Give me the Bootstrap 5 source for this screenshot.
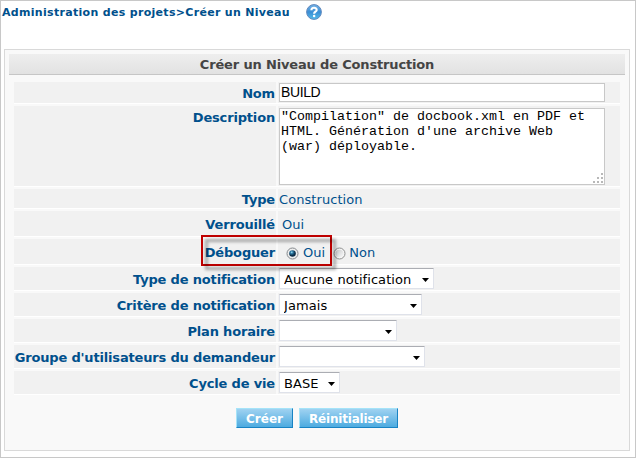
<!DOCTYPE html>
<html lang="fr">
<head>
<meta charset="utf-8">
<title>Créer un Niveau</title>
<meta name="viewport" content="width=device-width, initial-scale=1">
<link rel="stylesheet" href="https://cdn.jsdelivr.net/npm/bootstrap@5.3.0/dist/css/bootstrap.min.css">
<style>
body{font-family:Verdana,"DejaVu Sans",sans-serif;font-size:13px;line-height:16px;letter-spacing:.07px;color:#00508c;height:458px;border:1px solid #c8c8c8;overflow:hidden;background:#fff}
.crumb{font-size:11px;letter-spacing:.31px;height:48px;padding:3px 0 0 1px}
.crumb span{padding-top:1px}
.crumb svg{margin-left:16px}
.panel{margin:0 5px 0 3px;height:402px;border:1px solid #d9d9d9;background:#f9f9f9;padding:4px}
.panel-title{height:21px;line-height:21px;letter-spacing:-.16px;color:#444;background:linear-gradient(#eee,#e2e2e2);border-bottom:1px solid #c6c6c6;margin-bottom:7px}
.rows{margin:0 5px}
.line{height:24px;margin-bottom:2px;border-bottom:1px solid #fff;gap:2px}
.lab{width:262px;background:#f1f1f1;padding:5px 1px 0 0;white-space:nowrap;letter-spacing:-.17px}
.val{background:#f1f1f1;padding:1px;white-space:nowrap}
.line-name{height:22px}
.line-name .lab{padding-top:4px}
.line-desc{height:81px}
.line-desc .lab{padding-top:4px}
.line-type{height:20px}
.line-type .lab,.line-type .val{padding-top:3px}
.line-tall{height:26px}
.line-tall .lab,.line-tall .val{padding-top:6px}
.form-control.fld{width:326px;height:19px;min-height:0;border:1px solid #c8c8c8;border-radius:0;padding:0 1px 1px;color:#000;font:14px/16px "Liberation Sans",Arial,sans-serif;letter-spacing:-.4px}
.form-control.area{height:77px;margin-top:1px;resize:none;overflow:hidden;font:13.33px/15px "Liberation Mono","Courier New",monospace;letter-spacing:0}
.grip{right:1px;bottom:1px}
.form-select.pick{height:21px;border:1px solid #dfe2ea;border-top-color:#abadb3;border-radius:1px;color:#000;padding:2px 16px 0 4px;font-size:13px;line-height:17px;letter-spacing:.07px;background:#fff url("data:image/svg+xml,%3Csvg xmlns='http://www.w3.org/2000/svg' width='7' height='4'%3E%3Cpath d='M0 0h7L3.5 4z'/%3E%3C/svg%3E") no-repeat right 4px top 9px/7px 4px}
.w155{width:155px}.w143{width:143px}.w118{width:118px}.w146{width:146px}.w61{width:61px}
.callout{left:-77px;top:-4px;width:131px;height:31px;border:2px solid #c00000;z-index:2;pointer-events:none}
.callout::before{content:"";position:absolute;z-index:-1;left:2px;top:2px;width:131px;height:31px;border:3px solid rgba(0,0,0,.3);filter:blur(1.5px)}
.debug{padding-left:8px}
.debug svg{margin:2px 4px 0 0}
.debug .opt-no{margin:2px 3px 0 8px}
.btn.act{font-size:12px;font-weight:700;line-height:18px;height:20px;padding:1px 0 0;color:#fff;border:1px solid #a5e3f8;border-right-color:#1883c4;border-bottom-color:#1883c4;border-radius:0;background:linear-gradient(#9fd2f1,#4dabe0);letter-spacing:0}
.btn.act.w99{letter-spacing:-.2px}
.w57{width:57px}.w99{width:99px}
.actions{gap:6px;padding:11px 0 0 227px}
</style>
</head>
<body>
<header class="crumb d-flex fw-bold"><span>Administration des projets&gt;Créer un Niveau</span>
<svg width="16" height="16" viewBox="0 0 16 16"><defs><linearGradient id="hg" x2="0" y2="1"><stop stop-color="#75b5e7"/><stop offset=".5" stop-color="#3b8dd4"/><stop offset="1" stop-color="#54bceb"/></linearGradient></defs><circle cx="8" cy="8" r="7.4" fill="url(#hg)" stroke="#6389bd"/><path d="M5.4 6.2C5.4 3 10.7 3 10.7 5.9C10.7 7.7 8.1 7.7 8.1 9.7" fill="none" stroke="#fff" stroke-width="2.1"/><circle cx="8.1" cy="12" r="1.25" fill="#fff"/></svg></header>
<main class="panel">
<div class="panel-title text-center fw-bold">Créer un Niveau de Construction</div>
<div class="rows">
<div class="line line-name d-flex"><label class="lab text-end fw-bold" for="nom">Nom</label><div class="val flex-grow-1"><input id="nom" class="form-control fld" value="BUILD"></div></div>
<div class="line line-desc d-flex"><label class="lab text-end fw-bold" for="desc">Description</label><div class="val flex-grow-1"><div class="position-relative d-inline-block"><textarea id="desc" class="form-control fld area d-block" spellcheck="false">"Compilation" de docbook.xml en PDF et
HTML. Génération d'une archive Web
(war) déployable.</textarea><svg class="grip position-absolute" width="12" height="11" fill="#b8b8b8"><path d="M9 0h2v2h-2zM5 4h2v2h-2zM9 4h2v2h-2zM1 8h2v2h-2zM5 8h2v2h-2zM9 8h2v2h-2z"/></svg></div></div></div>
<div class="line line-type d-flex"><div class="lab text-end fw-bold">Type</div><div class="val flex-grow-1">Construction</div></div>
<div class="line line-tall d-flex"><div class="lab text-end fw-bold">Verrouillé</div><div class="val flex-grow-1 ps-1">Oui</div></div>
<div class="line line-tall d-flex"><div class="lab text-end fw-bold">Déboguer</div><div class="val debug flex-grow-1 position-relative d-flex"><div class="callout position-absolute"></div>
<svg width="13" height="13" viewBox="0 0 13 13"><defs><radialGradient id="rb" cx=".38" cy=".32"><stop stop-color="#a9e4f6"/><stop offset=".4" stop-color="#2f7ca6"/><stop offset="1" stop-color="#0b2d47"/></radialGradient></defs><circle cx="6.5" cy="6.5" r="5.5" fill="#eee" stroke="#84888c"/><circle cx="6.5" cy="6.5" r="3.3" fill="url(#rb)"/></svg><span>Oui</span>
<svg class="opt-no" width="13" height="13" viewBox="0 0 13 13"><defs><linearGradient id="rg" x2="1" y2="1"><stop stop-color="#c4c6c9"/><stop offset="1" stop-color="#fafafa"/></linearGradient></defs><circle cx="6.5" cy="6.5" r="5.5" fill="#f4f4f4" stroke="#8e8f8f"/><circle cx="6.5" cy="6.5" r="3.8" fill="url(#rg)"/></svg><span>Non</span></div></div>
<div class="line d-flex"><label class="lab text-end fw-bold">Type de notification</label><div class="val flex-grow-1"><select class="form-select pick w155"><option>Aucune notification</option></select></div></div>
<div class="line d-flex"><label class="lab text-end fw-bold">Critère de notification</label><div class="val flex-grow-1"><select class="form-select pick w143"><option>Jamais</option></select></div></div>
<div class="line d-flex"><label class="lab text-end fw-bold">Plan horaire</label><div class="val flex-grow-1"><select class="form-select pick w118"><option></option></select></div></div>
<div class="line d-flex"><label class="lab text-end fw-bold">Groupe d'utilisateurs du demandeur</label><div class="val flex-grow-1"><select class="form-select pick w146"><option></option></select></div></div>
<div class="line d-flex"><label class="lab text-end fw-bold">Cycle de vie</label><div class="val flex-grow-1"><select class="form-select pick w61"><option>BASE</option></select></div></div>
</div>
<div class="actions d-flex"><button class="btn act w57">Créer</button><button class="btn act w99">Réinitialiser</button></div>
</main>
<script src="https://cdn.jsdelivr.net/npm/bootstrap@5.3.0/dist/js/bootstrap.bundle.min.js"></script>
</body>
</html>
